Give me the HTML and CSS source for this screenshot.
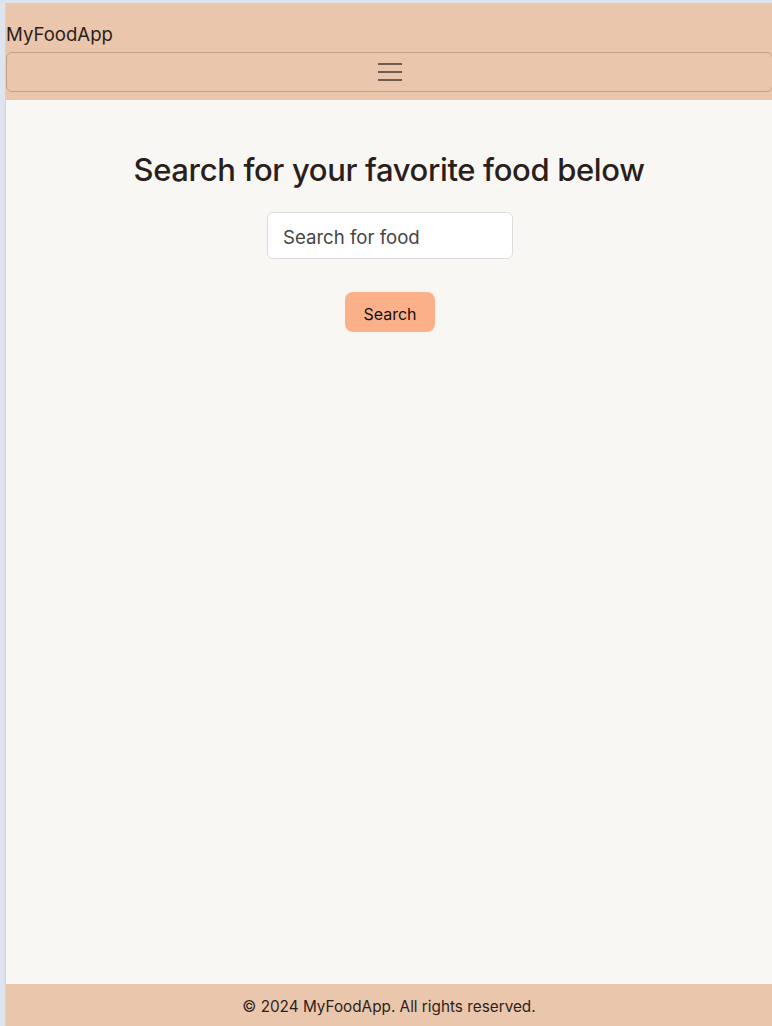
FILE: index.html
```html
<!DOCTYPE html>
<html lang="en">
<head>
<meta charset="utf-8">
<title>MyFoodApp</title>
<link rel="stylesheet" href="styles.css">
</head>
<body>
<div class="frame">
  <div class="page">
    <nav class="navbar">
      <a class="brand" href="#">MyFoodApp</a>
      <button class="toggler" type="button" aria-label="Toggle navigation">
        <svg width="24" height="20" viewBox="0 0 24 20" aria-hidden="true">
          <path d="M0 2h24M0 10h24M0 18h24" stroke="#4a3731" stroke-width="1.6" fill="none"/>
        </svg>
      </button>
    </nav>
    <main class="main">
      <h2 class="title">Search for your favorite food below</h2>
      <form class="search">
        <input class="search-input" type="text" placeholder="Search for food">
        <button class="search-btn" type="button">Search</button>
      </form>
    </main>
    <footer class="footer">© 2024 MyFoodApp. All rights reserved.</footer>
  </div>
</div>
</body>
</html>
```
FILE: styles.css
```css
* { box-sizing: border-box; }
html, body { margin: 0; padding: 0; height: 100%; }
body {
  font-family: Inter, "Liberation Sans", sans-serif;
  background: #e4e4e9;
}
.frame {
  height: 100%;
  padding-top: 3px;
  padding-left: 5px;
  background: #dee3ee;
}
.page {
  height: 100%;
  display: flex;
  flex-direction: column;
  border-left: 1px solid #cdd3df;
  background: #f9f7f4;
}
.navbar {
  background: #eac6ad;
  padding: 8px 0 8px 0;
  display: flex;
  flex-direction: column;
}
.brand {
  display: block;
  color: #2d1f1b;
  text-decoration: none;
  font-size: 18.6px;
  line-height: 30px;
  padding: 8px 0 3px;
}
.toggler {
  width: calc(100% + 1px);
  height: 40px;
  background: transparent;
  border: 1px solid #c99f85;
  border-radius: 6px;
  display: flex;
  align-items: center;
  justify-content: center;
  padding: 0;
  margin: 0;
}
.toggler svg { display: block; }
.main {
  flex: 1;
  display: flex;
  flex-direction: column;
  align-items: center;
  padding-top: 50px;
}
.title {
  margin: 0;
  font-size: 31px;
  line-height: 40px;
  font-weight: 500;
  color: #2b1f1c;
  letter-spacing: -0.35px;
}
.search {
  margin-top: 22px;
  margin-left: 2px;
  display: flex;
  flex-direction: column;
  align-items: center;
}
.search-input {
  width: 246px;
  height: 47px;
  border: 1px solid #dcdcdc;
  border-radius: 6px;
  background: #fff;
  padding: 3px 15px 0;
  font-family: inherit;
  font-size: 18.6px;
  color: #333;
}
.search-input::placeholder { color: #454545; opacity: 1; }
.search-btn {
  margin-top: 33px;
  width: 90px;
  height: 40px;
  border: 0;
  border-radius: 8px;
  background: #fcb089;
  font-family: inherit;
  font-size: 16px;
  color: #111;
  padding: 3px 0 0;
}
.footer {
  height: 42px;
  background: #eac6ad;
  color: #2d1f1b;
  font-size: 15.3px;
  display: flex;
  align-items: center;
  justify-content: center;
  padding-top: 3px;
}
```
